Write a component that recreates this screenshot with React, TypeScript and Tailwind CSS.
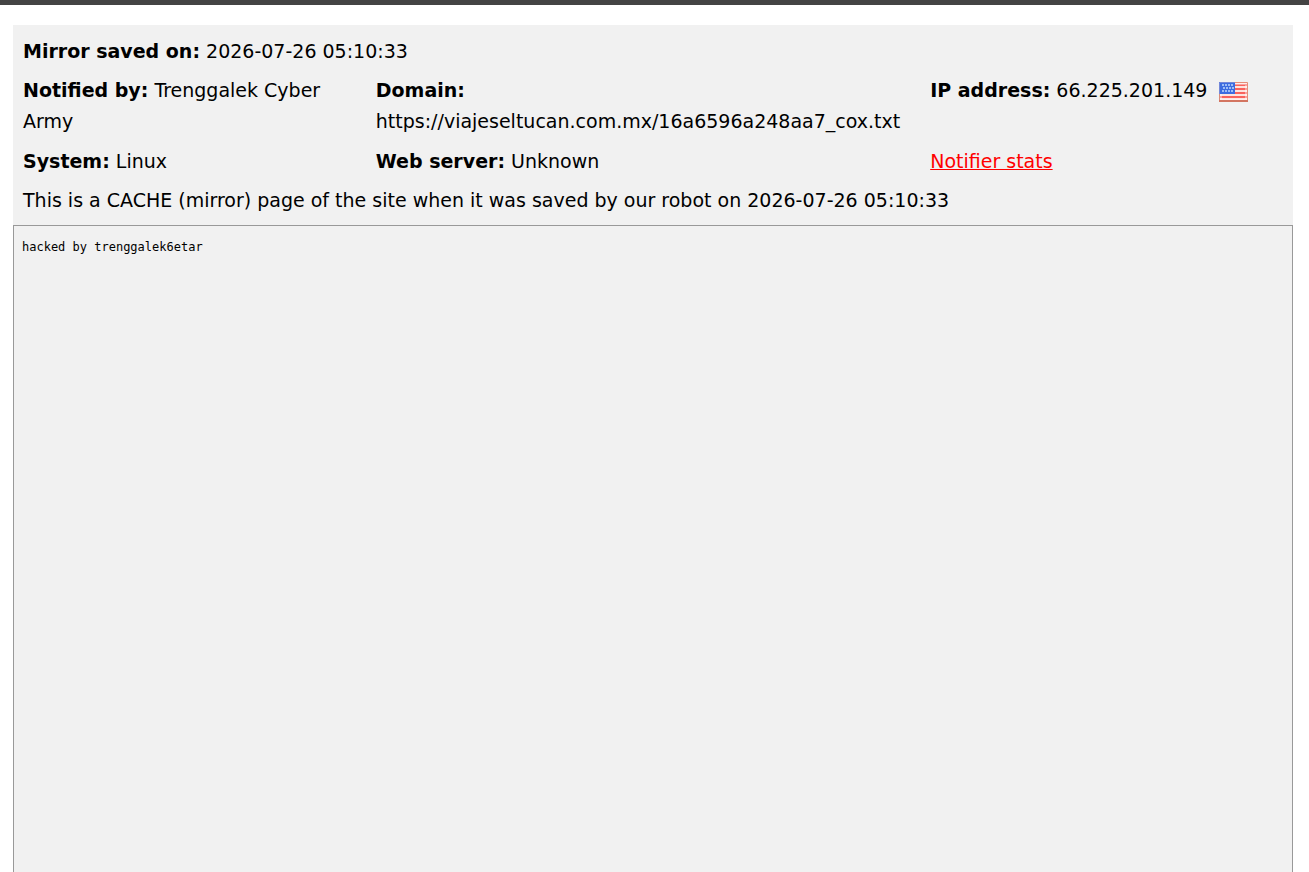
const mirror = {
    savedOn: "2026-07-26 05:10:33",
    notifier: "Trenggalek Cyber Army",
    domain: "https://viajeseltucan.com.mx/16a6596a248aa7_cox.txt",
    ip: "66.225.201.149",
    system: "Linux",
    server: "Unknown",
    content: "hacked by trenggalek6etar",
};

function UsFlag() {
    return (
        <svg className="inline-block w-[29px] h-5 ml-3 align-middle" viewBox="0 0 29 20" role="img" aria-label="United States">
            <rect width="29" height="20" fill="#fde3de" />
            {[2, 6, 10, 14].map((y) => (
                <rect key={y} y={y} width="29" height="2" fill="#f9625c" />
            ))}
            <rect x="2" y="2" width="25" height="16" fill="none" stroke="#ffffff" strokeOpacity="0.4" strokeWidth="2" />
            <rect width="16" height="12" fill="#3c6ce0" />
            {[2, 5, 8].map((y) =>
                [3, 6, 9, 12].map((x) => (
                    <rect key={`${x}-${y}`} x={x + (y === 5 ? 1 : 0)} y={y} width="2" height="2" fill="#9dbcf5" />
                ))
            )}
            <path d="M0.5 12V0.5H16" fill="none" stroke="#7488d8" />
            <path d="M16 0.5H28.5V18" fill="none" stroke="#e58d78" />
            <path d="M0.5 12V18" fill="none" stroke="#d98a78" />
            <path d="M0 19H29" fill="none" stroke="#d37561" strokeWidth="2" />
        </svg>
    );
}

export default function App() {
    return (
        <div className="flex min-h-screen flex-col bg-white text-black font-['Verdana','DejaVu_Sans',sans-serif]">
            <div className="h-[5px] bg-[#444444]" />

            <main className="mt-5 ml-[13px] mr-4 flex flex-1 flex-col bg-[#f1f1f1]">
                {/* Mirror details */}
                <div className="flex flex-col gap-2 px-2.5 pt-[11px] pb-[9px] text-[19px] leading-[31px]">
                    <p><strong>Mirror saved on:</strong> {mirror.savedOn}</p>

                    <div className="grid grid-cols-[28fr_44fr_28fr] gap-y-[9px]">
                        <p className="pr-4"><strong>Notified by:</strong> {mirror.notifier}</p>
                        <p><strong>Domain:</strong><br />{mirror.domain}</p>
                        <p className="whitespace-nowrap"><strong>IP address:</strong> {mirror.ip}<UsFlag /></p>
                        <p><strong>System:</strong> {mirror.system}</p>
                        <p><strong>Web server:</strong> {mirror.server}</p>
                        <p><a href="#stats" className="text-[#ff0000] underline">Notifier stats</a></p>
                    </div>

                    <p>This is a CACHE (mirror) page of the site when it was saved by our robot on {mirror.savedOn}</p>
                </div>

                {/* Saved page */}
                <section className="flex-1 border border-b-0 border-[#999999] px-2 py-3">
                    <pre className="text-[12px] leading-[18px] font-['DejaVu_Sans_Mono',monospace]">{mirror.content}</pre>
                </section>
            </main>
        </div>
    );
}
